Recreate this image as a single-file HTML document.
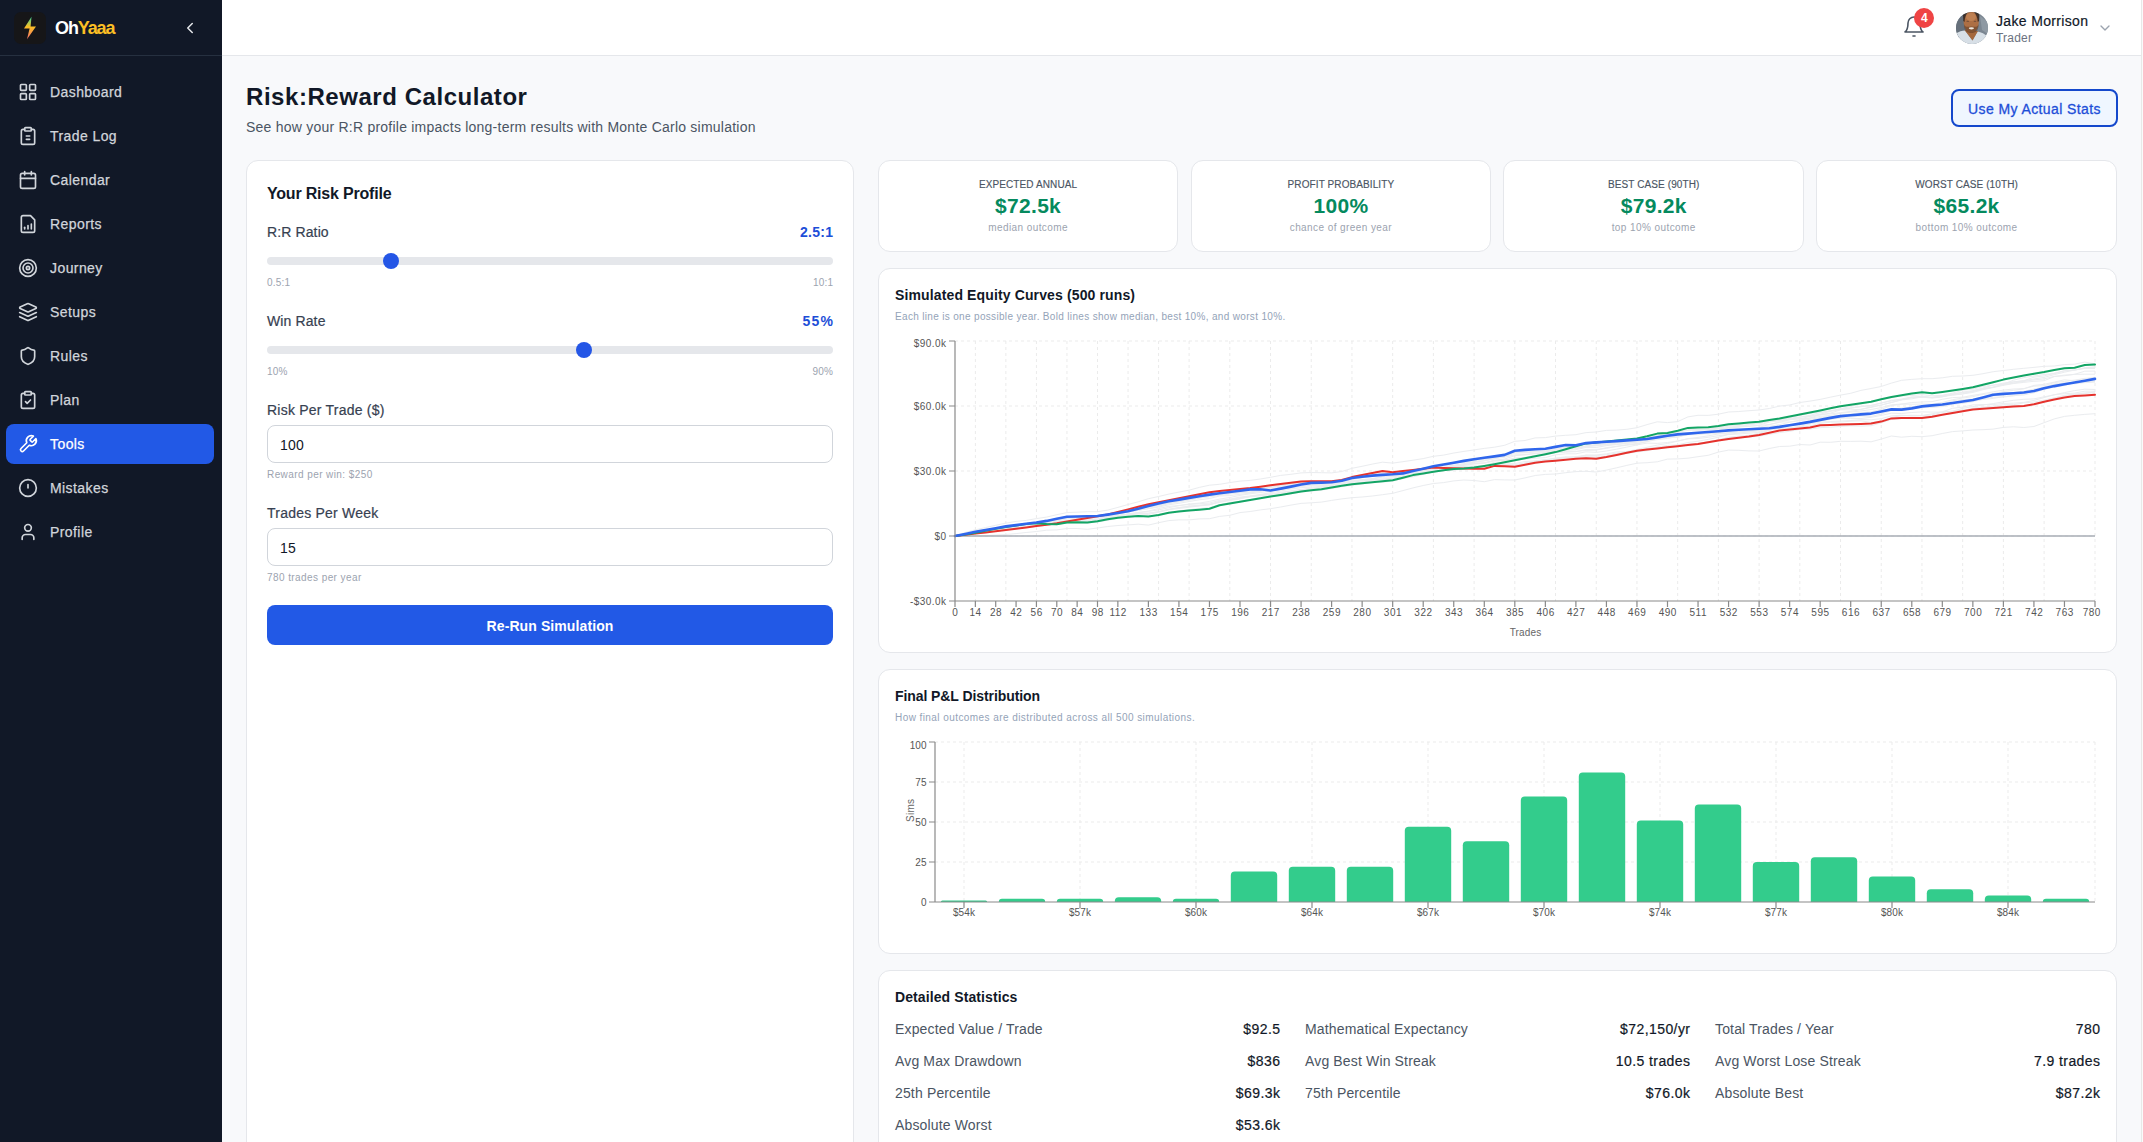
<!DOCTYPE html>
<html><head><meta charset="utf-8"><title>Risk:Reward Calculator</title>
<style>
html,body{margin:0;padding:0;}
body{width:2143px;height:1142px;overflow:hidden;position:relative;background:#f8f9fb;font-family:"Liberation Sans", sans-serif;}
.t{position:absolute;white-space:nowrap;}
.r{position:absolute;}
svg.r{overflow:visible;}
</style></head><body>
<div class="r" style="left:0px;top:0px;width:222px;height:1142px;background:#111827;"></div>
<div class="r" style="left:0px;top:55px;width:222px;height:1px;background:#263040;"></div>
<div class="r" style="left:14px;top:12px;width:32px;height:32px;background:#161618;border-radius:7px;"></div>
<svg class="r" style="left:22px;top:16px" width="16" height="24" viewBox="0 0 16 24">
<defs><linearGradient id="bolt" x1="0" y1="0" x2="0" y2="1">
<stop offset="0" stop-color="#34d399"/><stop offset="0.45" stop-color="#fbbf24"/><stop offset="1" stop-color="#f87171"/></linearGradient></defs>
<path d="M9.5 0.8 L2 12.6 L7.6 12.6 L5 23.2 L14 10.4 L8.6 10.4 Z" fill="url(#bolt)"/></svg>
<div class="t" style="top:15.80px;font-size:18px;line-height:25px;color:#ffffff;font-weight:700;letter-spacing:-1.1px;left:55.00px;">Oh<span style="color:#fbbf24">Yaaa</span></div>
<svg class="r" style="left:181px;top:19px" width="18" height="18" viewBox="0 0 24 24" fill="none" stroke="#e5e7eb" stroke-width="2" stroke-linecap="round" stroke-linejoin="round"><path d="m15 18-6-6 6-6"/></svg>
<svg class="r" style="left:18px;top:82px" width="20" height="20" viewBox="0 0 24 24" fill="none" stroke="#d1d5db" stroke-width="2" stroke-linecap="round" stroke-linejoin="round"><rect width="7" height="7" x="3" y="3" rx="1"/><rect width="7" height="7" x="14" y="3" rx="1"/><rect width="7" height="7" x="14" y="14" rx="1"/><rect width="7" height="7" x="3" y="14" rx="1"/></svg>
<div class="t" style="top:81.90px;font-size:14px;line-height:20px;color:#d1d5db;font-weight:400;letter-spacing:0.42px;left:50.00px;-webkit-text-stroke:0.25px #d1d5db;">Dashboard</div>
<svg class="r" style="left:18px;top:126px" width="20" height="20" viewBox="0 0 24 24" fill="none" stroke="#d1d5db" stroke-width="2" stroke-linecap="round" stroke-linejoin="round"><rect width="8" height="4" x="8" y="2" rx="1" ry="1"/><path d="M16 4h2a2 2 0 0 1 2 2v14a2 2 0 0 1-2 2H6a2 2 0 0 1-2-2V6a2 2 0 0 1 2-2h2"/><path d="M10 12h4"/><path d="M10 16h4"/></svg>
<div class="t" style="top:125.90px;font-size:14px;line-height:20px;color:#d1d5db;font-weight:400;letter-spacing:0.42px;left:50.00px;-webkit-text-stroke:0.25px #d1d5db;">Trade Log</div>
<svg class="r" style="left:18px;top:170px" width="20" height="20" viewBox="0 0 24 24" fill="none" stroke="#d1d5db" stroke-width="2" stroke-linecap="round" stroke-linejoin="round"><path d="M8 2v4"/><path d="M16 2v4"/><rect width="18" height="18" x="3" y="4" rx="2"/><path d="M3 10h18"/></svg>
<div class="t" style="top:169.90px;font-size:14px;line-height:20px;color:#d1d5db;font-weight:400;letter-spacing:0.42px;left:50.00px;-webkit-text-stroke:0.25px #d1d5db;">Calendar</div>
<svg class="r" style="left:18px;top:214px" width="20" height="20" viewBox="0 0 24 24" fill="none" stroke="#d1d5db" stroke-width="2" stroke-linecap="round" stroke-linejoin="round"><path d="M15 2H6a2 2 0 0 0-2 2v16a2 2 0 0 0 2 2h12a2 2 0 0 0 2-2V7Z"/><path d="M8 18v-2"/><path d="M12 18v-4"/><path d="M16 18v-6"/></svg>
<div class="t" style="top:213.90px;font-size:14px;line-height:20px;color:#d1d5db;font-weight:400;letter-spacing:0.42px;left:50.00px;-webkit-text-stroke:0.25px #d1d5db;">Reports</div>
<svg class="r" style="left:18px;top:258px" width="20" height="20" viewBox="0 0 24 24" fill="none" stroke="#d1d5db" stroke-width="2" stroke-linecap="round" stroke-linejoin="round"><circle cx="12" cy="12" r="10"/><circle cx="12" cy="12" r="6"/><circle cx="12" cy="12" r="2"/></svg>
<div class="t" style="top:257.90px;font-size:14px;line-height:20px;color:#d1d5db;font-weight:400;letter-spacing:0.42px;left:50.00px;-webkit-text-stroke:0.25px #d1d5db;">Journey</div>
<svg class="r" style="left:18px;top:302px" width="20" height="20" viewBox="0 0 24 24" fill="none" stroke="#d1d5db" stroke-width="2" stroke-linecap="round" stroke-linejoin="round"><path d="m12.83 2.18a2 2 0 0 0-1.66 0L2.6 6.08a1 1 0 0 0 0 1.83l8.58 3.91a2 2 0 0 0 1.66 0l8.58-3.9a1 1 0 0 0 0-1.83Z"/><path d="m22 17.65-9.17 4.16a2 2 0 0 1-1.66 0L2 17.65"/><path d="m22 12.65-9.17 4.16a2 2 0 0 1-1.66 0L2 12.65"/></svg>
<div class="t" style="top:301.90px;font-size:14px;line-height:20px;color:#d1d5db;font-weight:400;letter-spacing:0.42px;left:50.00px;-webkit-text-stroke:0.25px #d1d5db;">Setups</div>
<svg class="r" style="left:18px;top:346px" width="20" height="20" viewBox="0 0 24 24" fill="none" stroke="#d1d5db" stroke-width="2" stroke-linecap="round" stroke-linejoin="round"><path d="M20 13c0 5-3.5 7.5-7.66 8.95a1 1 0 0 1-.67-.01C7.5 20.5 4 18 4 13V6a1 1 0 0 1 1-1c2 0 4.5-1.2 6.24-2.72a1.17 1.17 0 0 1 1.52 0C14.51 3.81 17 5 19 5a1 1 0 0 1 1 1z"/></svg>
<div class="t" style="top:345.90px;font-size:14px;line-height:20px;color:#d1d5db;font-weight:400;letter-spacing:0.42px;left:50.00px;-webkit-text-stroke:0.25px #d1d5db;">Rules</div>
<svg class="r" style="left:18px;top:390px" width="20" height="20" viewBox="0 0 24 24" fill="none" stroke="#d1d5db" stroke-width="2" stroke-linecap="round" stroke-linejoin="round"><rect width="8" height="4" x="8" y="2" rx="1" ry="1"/><path d="M16 4h2a2 2 0 0 1 2 2v14a2 2 0 0 1-2 2H6a2 2 0 0 1-2-2V6a2 2 0 0 1 2-2h2"/><path d="m9 14 2 2 4-4"/></svg>
<div class="t" style="top:389.90px;font-size:14px;line-height:20px;color:#d1d5db;font-weight:400;letter-spacing:0.42px;left:50.00px;-webkit-text-stroke:0.25px #d1d5db;">Plan</div>
<div class="r" style="left:6px;top:424px;width:208px;height:40px;background:#2259e6;border-radius:8px;"></div>
<svg class="r" style="left:18px;top:434px" width="20" height="20" viewBox="0 0 24 24" fill="none" stroke="#ffffff" stroke-width="2" stroke-linecap="round" stroke-linejoin="round"><path d="M14.7 6.3a1 1 0 0 0 0 1.4l1.6 1.6a1 1 0 0 0 1.4 0l3.77-3.77a6 6 0 0 1-7.94 7.94l-6.91 6.91a2.12 2.12 0 0 1-3-3l6.91-6.91a6 6 0 0 1 7.94-7.94l-3.76 3.76z"/></svg>
<div class="t" style="top:433.90px;font-size:14px;line-height:20px;color:#ffffff;font-weight:400;letter-spacing:0.42px;left:50.00px;-webkit-text-stroke:0.25px #ffffff;">Tools</div>
<svg class="r" style="left:18px;top:478px" width="20" height="20" viewBox="0 0 24 24" fill="none" stroke="#d1d5db" stroke-width="2" stroke-linecap="round" stroke-linejoin="round"><circle cx="12" cy="12" r="10"/><path d="M12 8v4"/></svg>
<div class="t" style="top:477.90px;font-size:14px;line-height:20px;color:#d1d5db;font-weight:400;letter-spacing:0.42px;left:50.00px;-webkit-text-stroke:0.25px #d1d5db;">Mistakes</div>
<svg class="r" style="left:18px;top:522px" width="20" height="20" viewBox="0 0 24 24" fill="none" stroke="#d1d5db" stroke-width="2" stroke-linecap="round" stroke-linejoin="round"><path d="M19 21v-2a4 4 0 0 0-4-4H9a4 4 0 0 0-4 4v2"/><circle cx="12" cy="7" r="4"/></svg>
<div class="t" style="top:521.90px;font-size:14px;line-height:20px;color:#d1d5db;font-weight:400;letter-spacing:0.42px;left:50.00px;-webkit-text-stroke:0.25px #d1d5db;">Profile</div>
<div class="r" style="left:222px;top:0px;width:1919px;height:55px;background:#ffffff;"></div>
<div class="r" style="left:222px;top:55px;width:1919px;height:1px;background:#e5e7eb;"></div>
<div class="r" style="left:2141px;top:0px;width:1px;height:1142px;background:#e8e8e8;"></div>
<div class="r" style="left:2142px;top:0px;width:1px;height:1142px;background:#fafafa;"></div>
<svg class="r" style="left:1902px;top:15px" width="24" height="24" viewBox="0 0 24 24" fill="none" stroke="#4b5563" stroke-width="1.6" stroke-linecap="round" stroke-linejoin="round"><path d="M6 8a6 6 0 0 1 12 0c0 7 3 9 3 9H3s3-2 3-9"/><path d="M11 21h2"/></svg>
<div class="r" style="left:1914px;top:8px;width:20px;height:20px;background:#ef4444;border-radius:50%;"></div>
<div class="t" style="top:10.00px;font-size:12px;line-height:17px;color:#ffffff;font-weight:700;left:1324.30px;width:1200px;text-align:center;">4</div>
<svg class="r" style="left:1956px;top:12px" width="32" height="32" viewBox="0 0 32 32">
<defs><clipPath id="av"><circle cx="16" cy="16" r="16"/></clipPath></defs>
<g clip-path="url(#av)">
<rect width="32" height="32" fill="#7b8691"/>
<path d="M0 0H9V26H0Z" fill="#66707b"/>
<path d="M24 4 L32 10 V22 L26 18Z" fill="#8e99a3"/>
<path d="M0 32 V21.5 C3 19.5 6 18.5 9 18.5 L16.5 28.5 L21.5 19.5 C25 20 29 22 32 25 V32Z" fill="#d7dfe6"/>
<path d="M8.5 18 L22 19 L16.5 28.5Z" fill="#a5683d"/>
<ellipse cx="15.2" cy="10" rx="7.6" ry="10.6" fill="#ad6f44"/>
<ellipse cx="15" cy="5" rx="5" ry="4" fill="#c4875a" opacity="0.7"/>
<path d="M7 3 C8 0 11 -1 12 0 C10 2 9 5 8.5 10 L7.3 9Z M23.3 3 C22.5 0 19 -1 18 0 C20 2 21.3 5 21.8 10 L23 9Z" fill="#2e1f18" opacity="0.8"/>
<path d="M8 12 C8 19 11 21 15.3 21 C19.5 21 22.5 19 22.7 12 C21 16 19 14.5 15.3 14.5 C11.5 14.5 9.5 16 8 12Z" fill="#4a2f20" opacity="0.45"/>
<ellipse cx="15.4" cy="16.3" rx="2.6" ry="1.1" fill="#eee8e0"/>
<ellipse cx="11.8" cy="9.2" rx="1.4" ry="0.5" fill="#6a4a38"/>
<ellipse cx="19" cy="9.2" rx="1.4" ry="0.5" fill="#6a4a38"/>
</g></svg>
<div class="t" style="top:10.90px;font-size:14px;line-height:20px;color:#111827;font-weight:400;letter-spacing:0.34px;left:1996.00px;-webkit-text-stroke:0.2px #111827;">Jake Morrison</div>
<div class="t" style="top:30.40px;font-size:12px;line-height:17px;color:#6b7280;font-weight:400;letter-spacing:0.2px;left:1996.00px;">Trader</div>
<svg class="r" style="left:2097px;top:20px" width="16" height="16" viewBox="0 0 24 24" fill="none" stroke="#9ca3af" stroke-width="2" stroke-linecap="round" stroke-linejoin="round"><path d="m6 9 6 6 6-6"/></svg>
<div class="t" style="top:80.10px;font-size:24px;line-height:34px;color:#111827;font-weight:700;letter-spacing:0.55px;left:246.00px;">Risk:Reward Calculator</div>
<div class="t" style="top:116.90px;font-size:14px;line-height:20px;color:#4b5563;font-weight:400;letter-spacing:0.23px;left:246.00px;">See how your R:R profile impacts long-term results with Monte Carlo simulation</div>
<div class="r" style="left:1951px;top:89px;width:167px;height:38px;box-sizing:border-box;border:2px solid #1448cc;border-radius:8px;background:#eff6ff;"></div>
<div class="t" style="top:98.50px;font-size:14px;line-height:20px;color:#1d4ed8;font-weight:400;letter-spacing:0.4px;left:1434.50px;width:1200px;text-align:center;-webkit-text-stroke:0.3px #1d4ed8;">Use My Actual Stats</div>
<div class="r" style="left:246px;top:160px;width:608px;height:1100px;box-sizing:border-box;background:#ffffff;border:1px solid #e5e7eb;border-radius:12px;"></div>
<div class="t" style="top:182.70px;font-size:16px;line-height:22px;color:#111827;font-weight:700;letter-spacing:-0.2px;left:267.00px;">Your Risk Profile</div>
<div class="t" style="top:221.90px;font-size:14px;line-height:20px;color:#374151;font-weight:400;letter-spacing:0.12px;left:267.00px;-webkit-text-stroke:0.2px #374151;">R:R Ratio</div>
<div class="t" style="top:221.90px;font-size:14px;line-height:20px;color:#1d4ed8;font-weight:700;letter-spacing:0.3px;right:1309.70px;text-align:right;">2.5:1</div>
<div class="r" style="left:267px;top:257px;width:566px;height:8px;background:#e5e7eb;border-radius:4px;"></div>
<div class="r" style="left:382.79px;top:253px;width:16px;height:16px;background:#2456e6;border-radius:50%;"></div>
<div class="t" style="top:276.40px;font-size:10px;line-height:14px;color:#9ca3af;font-weight:400;letter-spacing:0.2px;left:267.00px;">0.5:1</div>
<div class="t" style="top:276.40px;font-size:10px;line-height:14px;color:#9ca3af;font-weight:400;letter-spacing:0.2px;right:1309.80px;text-align:right;">10:1</div>
<div class="t" style="top:310.90px;font-size:14px;line-height:20px;color:#374151;font-weight:400;letter-spacing:0.12px;left:267.00px;-webkit-text-stroke:0.2px #374151;">Win Rate</div>
<div class="t" style="top:310.90px;font-size:14px;line-height:20px;color:#1d4ed8;font-weight:700;letter-spacing:1.2px;right:1308.80px;text-align:right;">55%</div>
<div class="r" style="left:267px;top:346px;width:566px;height:8px;background:#e5e7eb;border-radius:4px;"></div>
<div class="r" style="left:576.38px;top:342px;width:16px;height:16px;background:#2456e6;border-radius:50%;"></div>
<div class="t" style="top:365.40px;font-size:10px;line-height:14px;color:#9ca3af;font-weight:400;letter-spacing:0.2px;left:267.00px;">10%</div>
<div class="t" style="top:365.40px;font-size:10px;line-height:14px;color:#9ca3af;font-weight:400;letter-spacing:0.2px;right:1309.80px;text-align:right;">90%</div>
<div class="t" style="top:399.90px;font-size:14px;line-height:20px;color:#374151;font-weight:400;letter-spacing:0.22px;left:267.00px;-webkit-text-stroke:0.2px #374151;">Risk Per Trade ($)</div>
<div class="r" style="left:267px;top:425px;width:566px;height:38px;box-sizing:border-box;border:1px solid #d1d5db;border-radius:8px;background:#fff;"></div>
<div class="t" style="top:434.90px;font-size:14px;line-height:20px;color:#111827;font-weight:400;letter-spacing:0.2px;left:280.00px;">100</div>
<div class="t" style="top:468.40px;font-size:10px;line-height:14px;color:#9ca3af;font-weight:400;letter-spacing:0.42px;left:267.00px;">Reward per win: $250</div>
<div class="t" style="top:502.90px;font-size:14px;line-height:20px;color:#374151;font-weight:400;letter-spacing:0.22px;left:267.00px;-webkit-text-stroke:0.2px #374151;">Trades Per Week</div>
<div class="r" style="left:267px;top:528px;width:566px;height:38px;box-sizing:border-box;border:1px solid #d1d5db;border-radius:8px;background:#fff;"></div>
<div class="t" style="top:537.90px;font-size:14px;line-height:20px;color:#111827;font-weight:400;letter-spacing:0.2px;left:280.00px;">15</div>
<div class="t" style="top:571.40px;font-size:10px;line-height:14px;color:#9ca3af;font-weight:400;letter-spacing:0.42px;left:267.00px;">780 trades per year</div>
<div class="r" style="left:267px;top:605px;width:566px;height:40px;background:#2259e6;border-radius:8px;"></div>
<div class="t" style="top:615.90px;font-size:14px;line-height:20px;color:#ffffff;font-weight:700;letter-spacing:0.1px;left:-50.00px;width:1200px;text-align:center;">Re-Run Simulation</div>
<div class="r" style="left:877.67px;top:160px;width:300.83px;height:92px;box-sizing:border-box;background:#ffffff;border:1px solid #e5e7eb;border-radius:12px;"></div>
<div class="t" style="top:178.00px;font-size:10px;line-height:14px;color:#4b5563;font-weight:400;letter-spacing:0.1px;left:428.09px;width:1200px;text-align:center;-webkit-text-stroke:0.15px #4b5563;">EXPECTED ANNUAL</div>
<div class="t" style="top:191.20px;font-size:21px;line-height:29px;color:#058a5e;font-weight:700;letter-spacing:0.3px;left:428.09px;width:1200px;text-align:center;">$72.5k</div>
<div class="t" style="top:220.50px;font-size:10px;line-height:14px;color:#9ca3af;font-weight:400;letter-spacing:0.42px;left:428.09px;width:1200px;text-align:center;">median outcome</div>
<div class="r" style="left:1190.5px;top:160px;width:300.83px;height:92px;box-sizing:border-box;background:#ffffff;border:1px solid #e5e7eb;border-radius:12px;"></div>
<div class="t" style="top:178.00px;font-size:10px;line-height:14px;color:#4b5563;font-weight:400;letter-spacing:0.1px;left:740.92px;width:1200px;text-align:center;-webkit-text-stroke:0.15px #4b5563;">PROFIT PROBABILITY</div>
<div class="t" style="top:191.20px;font-size:21px;line-height:29px;color:#058a5e;font-weight:700;letter-spacing:0.3px;left:740.92px;width:1200px;text-align:center;">100%</div>
<div class="t" style="top:220.50px;font-size:10px;line-height:14px;color:#9ca3af;font-weight:400;letter-spacing:0.42px;left:740.92px;width:1200px;text-align:center;">chance of green year</div>
<div class="r" style="left:1503.34px;top:160px;width:300.83px;height:92px;box-sizing:border-box;background:#ffffff;border:1px solid #e5e7eb;border-radius:12px;"></div>
<div class="t" style="top:178.00px;font-size:10px;line-height:14px;color:#4b5563;font-weight:400;letter-spacing:0.1px;left:1053.75px;width:1200px;text-align:center;-webkit-text-stroke:0.15px #4b5563;">BEST CASE (90TH)</div>
<div class="t" style="top:191.20px;font-size:21px;line-height:29px;color:#058a5e;font-weight:700;letter-spacing:0.3px;left:1053.75px;width:1200px;text-align:center;">$79.2k</div>
<div class="t" style="top:220.50px;font-size:10px;line-height:14px;color:#9ca3af;font-weight:400;letter-spacing:0.42px;left:1053.75px;width:1200px;text-align:center;">top 10% outcome</div>
<div class="r" style="left:1816.17px;top:160px;width:300.83px;height:92px;box-sizing:border-box;background:#ffffff;border:1px solid #e5e7eb;border-radius:12px;"></div>
<div class="t" style="top:178.00px;font-size:10px;line-height:14px;color:#4b5563;font-weight:400;letter-spacing:0.1px;left:1366.58px;width:1200px;text-align:center;-webkit-text-stroke:0.15px #4b5563;">WORST CASE (10TH)</div>
<div class="t" style="top:191.20px;font-size:21px;line-height:29px;color:#058a5e;font-weight:700;letter-spacing:0.3px;left:1366.58px;width:1200px;text-align:center;">$65.2k</div>
<div class="t" style="top:220.50px;font-size:10px;line-height:14px;color:#9ca3af;font-weight:400;letter-spacing:0.42px;left:1366.58px;width:1200px;text-align:center;">bottom 10% outcome</div>
<div class="r" style="left:877.67px;top:268px;width:1239.33px;height:385px;box-sizing:border-box;background:#ffffff;border:1px solid #e5e7eb;border-radius:12px;"></div>
<div class="t" style="top:285.40px;font-size:14px;line-height:20px;color:#111827;font-weight:700;letter-spacing:0.13px;left:895.00px;">Simulated Equity Curves (500 runs)</div>
<div class="t" style="top:310.40px;font-size:10px;line-height:14px;color:#94a3b8;font-weight:400;letter-spacing:0.33px;left:895.00px;">Each line is one possible year. Bold lines show median, best 10%, and worst 10%.</div>
<div class="r" style="left:877.67px;top:669px;width:1239.33px;height:285px;box-sizing:border-box;background:#ffffff;border:1px solid #e5e7eb;border-radius:12px;"></div>
<div class="t" style="top:686.40px;font-size:14px;line-height:20px;color:#111827;font-weight:700;letter-spacing:-0.08px;left:895.00px;">Final P&amp;L Distribution</div>
<div class="t" style="top:711.40px;font-size:10px;line-height:14px;color:#94a3b8;font-weight:400;letter-spacing:0.43px;left:895.00px;">How final outcomes are distributed across all 500 simulations.</div>
<div class="r" style="left:877.67px;top:970px;width:1239.33px;height:400px;box-sizing:border-box;background:#ffffff;border:1px solid #e5e7eb;border-radius:12px;"></div>
<div class="t" style="top:987.40px;font-size:14px;line-height:20px;color:#111827;font-weight:700;letter-spacing:0.1px;left:895.00px;">Detailed Statistics</div>
<div class="t" style="top:1019.40px;font-size:14px;line-height:20px;color:#4b5563;font-weight:400;letter-spacing:0.15px;left:895.00px;">Expected Value / Trade</div>
<div class="t" style="top:1019.40px;font-size:14px;line-height:20px;color:#111827;font-weight:400;letter-spacing:0.42px;right:862.58px;text-align:right;-webkit-text-stroke:0.2px #111827;">$92.5</div>
<div class="t" style="top:1019.40px;font-size:14px;line-height:20px;color:#4b5563;font-weight:400;letter-spacing:0.15px;left:1305.00px;">Mathematical Expectancy</div>
<div class="t" style="top:1019.40px;font-size:14px;line-height:20px;color:#111827;font-weight:400;letter-spacing:0.42px;right:452.58px;text-align:right;-webkit-text-stroke:0.2px #111827;">$72,150/yr</div>
<div class="t" style="top:1019.40px;font-size:14px;line-height:20px;color:#4b5563;font-weight:400;letter-spacing:0.15px;left:1715.00px;">Total Trades / Year</div>
<div class="t" style="top:1019.40px;font-size:14px;line-height:20px;color:#111827;font-weight:400;letter-spacing:0.42px;right:42.58px;text-align:right;-webkit-text-stroke:0.2px #111827;">780</div>
<div class="t" style="top:1051.40px;font-size:14px;line-height:20px;color:#4b5563;font-weight:400;letter-spacing:0.15px;left:895.00px;">Avg Max Drawdown</div>
<div class="t" style="top:1051.40px;font-size:14px;line-height:20px;color:#111827;font-weight:400;letter-spacing:0.42px;right:862.58px;text-align:right;-webkit-text-stroke:0.2px #111827;">$836</div>
<div class="t" style="top:1051.40px;font-size:14px;line-height:20px;color:#4b5563;font-weight:400;letter-spacing:0.15px;left:1305.00px;">Avg Best Win Streak</div>
<div class="t" style="top:1051.40px;font-size:14px;line-height:20px;color:#111827;font-weight:400;letter-spacing:0.42px;right:452.58px;text-align:right;-webkit-text-stroke:0.2px #111827;">10.5 trades</div>
<div class="t" style="top:1051.40px;font-size:14px;line-height:20px;color:#4b5563;font-weight:400;letter-spacing:0.15px;left:1715.00px;">Avg Worst Lose Streak</div>
<div class="t" style="top:1051.40px;font-size:14px;line-height:20px;color:#111827;font-weight:400;letter-spacing:0.42px;right:42.58px;text-align:right;-webkit-text-stroke:0.2px #111827;">7.9 trades</div>
<div class="t" style="top:1083.40px;font-size:14px;line-height:20px;color:#4b5563;font-weight:400;letter-spacing:0.15px;left:895.00px;">25th Percentile</div>
<div class="t" style="top:1083.40px;font-size:14px;line-height:20px;color:#111827;font-weight:400;letter-spacing:0.42px;right:862.58px;text-align:right;-webkit-text-stroke:0.2px #111827;">$69.3k</div>
<div class="t" style="top:1083.40px;font-size:14px;line-height:20px;color:#4b5563;font-weight:400;letter-spacing:0.15px;left:1305.00px;">75th Percentile</div>
<div class="t" style="top:1083.40px;font-size:14px;line-height:20px;color:#111827;font-weight:400;letter-spacing:0.42px;right:452.58px;text-align:right;-webkit-text-stroke:0.2px #111827;">$76.0k</div>
<div class="t" style="top:1083.40px;font-size:14px;line-height:20px;color:#4b5563;font-weight:400;letter-spacing:0.15px;left:1715.00px;">Absolute Best</div>
<div class="t" style="top:1083.40px;font-size:14px;line-height:20px;color:#111827;font-weight:400;letter-spacing:0.42px;right:42.58px;text-align:right;-webkit-text-stroke:0.2px #111827;">$87.2k</div>
<div class="t" style="top:1115.40px;font-size:14px;line-height:20px;color:#4b5563;font-weight:400;letter-spacing:0.15px;left:895.00px;">Absolute Worst</div>
<div class="t" style="top:1115.40px;font-size:14px;line-height:20px;color:#111827;font-weight:400;letter-spacing:0.42px;right:862.58px;text-align:right;-webkit-text-stroke:0.2px #111827;">$53.6k</div>
<svg class="r" style="left:0;top:0" width="2143" height="1142" viewBox="0 0 2143 1142" font-family='"Liberation Sans", sans-serif'>
<path d="M955.0 341H2095.0 M955.0 406H2095.0 M955.0 471H2095.0 M955.0 536H2095.0 M975.36 341V601 M1005.89 341V601 M1036.43 341V601 M1066.96 341V601 M1097.50 341V601 M1128.04 341V601 M1158.57 341V601 M1189.11 341V601 M1229.82 341V601 M1270.54 341V601 M1311.25 341V601 M1351.96 341V601 M1392.68 341V601 M1433.39 341V601 M1474.11 341V601 M1514.82 341V601 M1555.54 341V601 M1596.25 341V601 M1636.96 341V601 M1677.68 341V601 M1718.39 341V601 M1759.11 341V601 M1799.82 341V601 M1840.54 341V601 M1881.25 341V601 M1921.96 341V601 M1962.68 341V601 M2003.39 341V601 M2044.11 341V601 M2095.00 341V601" stroke="#ebebeb" stroke-width="1" stroke-dasharray="3 3" fill="none"/>
<polyline points="955.0,536.0 965.2,533.8 975.4,531.9 985.5,530.1 995.7,528.1 1005.9,526.3 1016.1,525.1 1026.2,524.0 1036.4,522.5 1046.6,520.6 1056.8,518.6 1067.0,516.8 1077.1,517.0 1087.3,517.0 1097.5,516.7 1107.7,515.0 1117.9,513.3 1128.0,510.6 1138.2,507.8 1148.4,505.0 1158.6,503.0 1168.8,501.0 1178.9,498.9 1189.1,496.9 1199.3,495.0 1209.5,493.3 1219.6,492.4 1229.8,491.4 1240.0,489.5 1250.2,488.8 1260.4,486.9 1270.5,485.4 1280.7,483.4 1290.9,482.3 1301.1,480.9 1311.2,480.6 1321.4,482.2 1331.6,482.0 1341.8,481.2 1352.0,477.6 1362.1,475.5 1372.3,473.8 1382.5,471.8 1392.7,473.1 1402.9,471.8 1413.0,470.1 1423.2,469.0 1433.4,466.3 1443.6,465.5 1453.8,463.4 1463.9,461.9 1474.1,460.3 1484.3,459.4 1494.5,457.5 1504.6,456.5 1514.8,452.3 1525.0,452.1 1535.2,451.6 1545.4,451.0 1555.5,448.6 1565.7,447.0 1575.9,447.3 1586.1,446.1 1596.2,445.0 1606.4,444.1 1616.6,443.2 1626.8,442.2 1637.0,441.1 1647.1,438.7 1657.3,435.7 1667.5,434.3 1677.7,431.8 1687.9,429.3 1698.0,429.8 1708.2,429.9 1718.4,429.2 1728.6,427.7 1738.8,427.1 1748.9,426.1 1759.1,425.4 1769.3,424.6 1779.5,422.4 1789.6,419.7 1799.8,418.8 1810.0,416.5 1820.2,414.8 1830.4,413.1 1840.5,409.9 1850.7,409.9 1860.9,409.3 1871.1,407.4 1881.2,405.1 1891.4,402.5 1901.6,399.7 1911.8,397.6 1922.0,396.2 1932.1,397.7 1942.3,396.6 1952.5,394.8 1962.7,393.9 1972.9,391.3 1983.0,389.1 1993.2,387.2 2003.4,384.1 2013.6,380.2 2023.8,377.6 2033.9,376.0 2044.1,374.5 2054.3,373.5 2064.5,370.7 2074.6,370.1 2084.8,367.8 2095.0,366.9" fill="none" stroke="#eaecef" stroke-width="1"/>
<polyline points="955.0,536.0 965.2,533.9 975.4,532.1 985.5,530.5 995.7,528.7 1005.9,526.9 1016.1,525.7 1026.2,524.9 1036.4,523.7 1046.6,522.1 1056.8,520.4 1067.0,518.3 1077.1,518.5 1087.3,518.1 1097.5,517.6 1107.7,516.1 1117.9,514.1 1128.0,511.8 1138.2,509.4 1148.4,506.6 1158.6,504.3 1168.8,502.0 1178.9,499.9 1189.1,498.2 1199.3,496.2 1209.5,494.6 1219.6,493.1 1229.8,491.9 1240.0,490.8 1250.2,489.8 1260.4,488.8 1270.5,487.1 1280.7,485.6 1290.9,483.7 1301.1,483.2 1311.2,483.3 1321.4,483.0 1331.6,482.5 1341.8,480.7 1352.0,478.0 1362.1,476.2 1372.3,475.4 1382.5,473.5 1392.7,474.0 1402.9,471.3 1413.0,470.8 1423.2,469.5 1433.4,466.4 1443.6,464.7 1453.8,462.2 1463.9,462.5 1474.1,461.6 1484.3,460.6 1494.5,458.7 1504.6,456.1 1514.8,452.5 1525.0,450.7 1535.2,450.3 1545.4,448.5 1555.5,446.4 1565.7,445.5 1575.9,446.7 1586.1,444.1 1596.2,442.7 1606.4,442.3 1616.6,441.8 1626.8,440.1 1637.0,438.7 1647.1,436.2 1657.3,433.2 1667.5,432.3 1677.7,431.2 1687.9,429.2 1698.0,430.1 1708.2,429.5 1718.4,428.2 1728.6,425.7 1738.8,424.8 1748.9,423.1 1759.1,421.0 1769.3,420.0 1779.5,419.5 1789.6,418.3 1799.8,417.2 1810.0,415.3 1820.2,412.6 1830.4,410.8 1840.5,408.7 1850.7,406.5 1860.9,404.0 1871.1,401.7 1881.2,399.6 1891.4,397.6 1901.6,395.9 1911.8,395.5 1922.0,394.6 1932.1,395.8 1942.3,395.3 1952.5,393.2 1962.7,390.1 1972.9,389.2 1983.0,386.4 1993.2,385.2 2003.4,383.1 2013.6,381.8 2023.8,380.7 2033.9,377.2 2044.1,375.9 2054.3,373.3 2064.5,370.9 2074.6,370.0 2084.8,368.3 2095.0,368.4" fill="none" stroke="#eaecef" stroke-width="1"/>
<polyline points="955.0,536.0 965.2,534.0 975.4,532.0 985.5,530.0 995.7,528.3 1005.9,526.7 1016.1,525.3 1026.2,524.1 1036.4,522.8 1046.6,521.5 1056.8,519.4 1067.0,517.3 1077.1,516.9 1087.3,517.3 1097.5,517.2 1107.7,515.5 1117.9,513.3 1128.0,511.1 1138.2,508.9 1148.4,506.9 1158.6,504.8 1168.8,502.3 1178.9,500.3 1189.1,499.1 1199.3,497.5 1209.5,495.7 1219.6,494.0 1229.8,492.9 1240.0,491.8 1250.2,490.4 1260.4,489.1 1270.5,487.7 1280.7,486.0 1290.9,484.4 1301.1,482.7 1311.2,481.7 1321.4,482.0 1331.6,480.7 1341.8,479.4 1352.0,476.7 1362.1,474.7 1372.3,473.2 1382.5,472.1 1392.7,473.0 1402.9,471.5 1413.0,469.8 1423.2,468.5 1433.4,466.9 1443.6,465.0 1453.8,462.7 1463.9,460.6 1474.1,458.9 1484.3,457.2 1494.5,456.4 1504.6,455.6 1514.8,452.4 1525.0,452.3 1535.2,451.1 1545.4,450.9 1555.5,449.8 1565.7,447.1 1575.9,446.3 1586.1,444.1 1596.2,444.3 1606.4,444.1 1616.6,442.2 1626.8,441.8 1637.0,440.4 1647.1,438.1 1657.3,435.5 1667.5,434.7 1677.7,431.7 1687.9,428.7 1698.0,427.7 1708.2,427.6 1718.4,428.0 1728.6,428.2 1738.8,426.9 1748.9,424.8 1759.1,423.6 1769.3,421.3 1779.5,421.0 1789.6,419.7 1799.8,417.2 1810.0,416.0 1820.2,414.2 1830.4,411.3 1840.5,409.3 1850.7,407.9 1860.9,406.7 1871.1,405.5 1881.2,403.1 1891.4,400.9 1901.6,399.0 1911.8,397.0 1922.0,397.2 1932.1,398.0 1942.3,396.9 1952.5,394.1 1962.7,392.5 1972.9,391.5 1983.0,388.4 1993.2,387.2 2003.4,384.7 2013.6,383.1 2023.8,381.5 2033.9,379.9 2044.1,378.9 2054.3,376.4 2064.5,375.7 2074.6,374.3 2084.8,371.2 2095.0,371.1" fill="none" stroke="#eaecef" stroke-width="1"/>
<polyline points="955.0,536.0 965.2,534.0 975.4,532.2 985.5,530.8 995.7,528.9 1005.9,527.4 1016.1,526.4 1026.2,525.3 1036.4,524.0 1046.6,522.3 1056.8,520.4 1067.0,518.2 1077.1,517.9 1087.3,517.8 1097.5,517.3 1107.7,515.9 1117.9,513.6 1128.0,511.1 1138.2,509.4 1148.4,507.4 1158.6,505.3 1168.8,503.2 1178.9,501.4 1189.1,499.4 1199.3,497.6 1209.5,496.8 1219.6,494.8 1229.8,493.5 1240.0,492.7 1250.2,491.8 1260.4,490.7 1270.5,489.5 1280.7,487.1 1290.9,485.4 1301.1,484.2 1311.2,483.8 1321.4,484.1 1331.6,483.8 1341.8,482.3 1352.0,479.7 1362.1,477.8 1372.3,476.2 1382.5,474.7 1392.7,475.1 1402.9,473.1 1413.0,471.1 1423.2,470.2 1433.4,468.7 1443.6,467.4 1453.8,466.1 1463.9,464.9 1474.1,463.6 1484.3,462.8 1494.5,460.2 1504.6,459.0 1514.8,455.7 1525.0,454.9 1535.2,453.5 1545.4,452.7 1555.5,451.3 1565.7,450.4 1575.9,449.7 1586.1,447.4 1596.2,447.5 1606.4,445.6 1616.6,444.6 1626.8,443.0 1637.0,441.6 1647.1,438.5 1657.3,436.9 1667.5,436.0 1677.7,433.6 1687.9,432.7 1698.0,432.5 1708.2,434.0 1718.4,432.8 1728.6,430.6 1738.8,429.5 1748.9,429.4 1759.1,428.0 1769.3,426.3 1779.5,424.7 1789.6,422.1 1799.8,420.2 1810.0,417.9 1820.2,414.8 1830.4,413.8 1840.5,412.7 1850.7,411.4 1860.9,409.5 1871.1,406.8 1881.2,405.0 1891.4,402.5 1901.6,399.9 1911.8,398.8 1922.0,396.9 1932.1,397.4 1942.3,396.3 1952.5,395.2 1962.7,393.9 1972.9,392.4 1983.0,389.7 1993.2,387.5 2003.4,385.3 2013.6,383.5 2023.8,382.4 2033.9,381.3 2044.1,380.7 2054.3,376.6 2064.5,375.1 2074.6,374.4 2084.8,374.2 2095.0,374.2" fill="none" stroke="#eaecef" stroke-width="1"/>
<polyline points="955.0,536.0 965.2,534.1 975.4,532.3 985.5,530.8 995.7,529.1 1005.9,527.5 1016.1,526.2 1026.2,524.9 1036.4,523.4 1046.6,521.5 1056.8,520.0 1067.0,518.5 1077.1,518.2 1087.3,517.9 1097.5,517.4 1107.7,515.9 1117.9,513.7 1128.0,511.8 1138.2,510.3 1148.4,508.5 1158.6,506.4 1168.8,503.7 1178.9,501.9 1189.1,500.1 1199.3,498.2 1209.5,496.4 1219.6,495.3 1229.8,494.0 1240.0,492.7 1250.2,492.4 1260.4,490.9 1270.5,488.7 1280.7,487.5 1290.9,485.7 1301.1,485.2 1311.2,483.9 1321.4,483.3 1331.6,482.0 1341.8,480.8 1352.0,478.0 1362.1,476.5 1372.3,474.8 1382.5,473.0 1392.7,474.1 1402.9,472.9 1413.0,471.4 1423.2,469.5 1433.4,466.9 1443.6,465.5 1453.8,465.2 1463.9,463.6 1474.1,462.2 1484.3,461.0 1494.5,458.5 1504.6,457.2 1514.8,454.8 1525.0,454.5 1535.2,453.5 1545.4,452.5 1555.5,450.1 1565.7,448.9 1575.9,448.8 1586.1,446.6 1596.2,445.9 1606.4,444.8 1616.6,444.3 1626.8,443.4 1637.0,442.2 1647.1,440.2 1657.3,438.4 1667.5,437.7 1677.7,437.3 1687.9,434.2 1698.0,433.3 1708.2,433.3 1718.4,431.7 1728.6,431.0 1738.8,429.8 1748.9,428.8 1759.1,427.3 1769.3,424.5 1779.5,422.0 1789.6,422.0 1799.8,420.7 1810.0,419.3 1820.2,417.7 1830.4,416.4 1840.5,415.5 1850.7,414.0 1860.9,412.5 1871.1,411.9 1881.2,409.3 1891.4,405.6 1901.6,404.1 1911.8,402.5 1922.0,402.0 1932.1,401.6 1942.3,399.3 1952.5,397.6 1962.7,397.2 1972.9,395.4 1983.0,393.7 1993.2,391.8 2003.4,390.1 2013.6,389.0 2023.8,388.6 2033.9,385.4 2044.1,384.3 2054.3,382.1 2064.5,379.8 2074.6,380.8 2084.8,378.4 2095.0,379.1" fill="none" stroke="#eaecef" stroke-width="1"/>
<polyline points="955.0,536.0 965.2,534.3 975.4,532.6 985.5,531.2 995.7,529.6 1005.9,527.7 1016.1,526.4 1026.2,525.0 1036.4,523.5 1046.6,522.5 1056.8,520.9 1067.0,519.0 1077.1,518.7 1087.3,518.5 1097.5,517.6 1107.7,515.9 1117.9,514.0 1128.0,512.0 1138.2,510.3 1148.4,508.7 1158.6,507.1 1168.8,504.8 1178.9,503.3 1189.1,501.5 1199.3,499.8 1209.5,498.5 1219.6,496.0 1229.8,495.6 1240.0,494.3 1250.2,493.0 1260.4,491.2 1270.5,490.4 1280.7,489.5 1290.9,488.2 1301.1,486.1 1311.2,485.1 1321.4,484.9 1331.6,483.9 1341.8,482.0 1352.0,479.1 1362.1,477.3 1372.3,475.9 1382.5,474.1 1392.7,474.5 1402.9,474.2 1413.0,473.3 1423.2,471.2 1433.4,469.3 1443.6,467.6 1453.8,465.9 1463.9,465.2 1474.1,464.1 1484.3,463.1 1494.5,460.8 1504.6,460.0 1514.8,458.6 1525.0,457.6 1535.2,455.5 1545.4,454.4 1555.5,452.5 1565.7,451.6 1575.9,451.4 1586.1,450.5 1596.2,450.2 1606.4,447.7 1616.6,446.5 1626.8,445.2 1637.0,444.1 1647.1,441.4 1657.3,439.6 1667.5,438.4 1677.7,436.3 1687.9,434.6 1698.0,434.1 1708.2,432.7 1718.4,430.3 1728.6,427.3 1738.8,426.2 1748.9,426.3 1759.1,425.2 1769.3,422.1 1779.5,420.0 1789.6,419.1 1799.8,418.9 1810.0,418.3 1820.2,416.4 1830.4,415.3 1840.5,413.3 1850.7,412.1 1860.9,411.0 1871.1,409.5 1881.2,407.6 1891.4,404.8 1901.6,404.1 1911.8,404.2 1922.0,404.0 1932.1,404.2 1942.3,402.5 1952.5,399.7 1962.7,398.0 1972.9,396.7 1983.0,394.3 1993.2,393.6 2003.4,391.6 2013.6,390.3 2023.8,388.8 2033.9,386.1 2044.1,385.7 2054.3,382.6 2064.5,381.4 2074.6,380.1 2084.8,378.5 2095.0,377.3" fill="none" stroke="#eaecef" stroke-width="1"/>
<polyline points="955.0,536.0 965.2,534.4 975.4,533.0 985.5,531.4 995.7,529.9 1005.9,528.6 1016.1,527.2 1026.2,526.0 1036.4,524.6 1046.6,523.2 1056.8,521.9 1067.0,520.4 1077.1,520.2 1087.3,519.9 1097.5,519.3 1107.7,517.1 1117.9,515.3 1128.0,514.1 1138.2,512.6 1148.4,511.4 1158.6,509.9 1168.8,507.7 1178.9,505.7 1189.1,504.0 1199.3,503.1 1209.5,501.4 1219.6,499.1 1229.8,497.5 1240.0,495.4 1250.2,493.8 1260.4,492.5 1270.5,491.0 1280.7,489.4 1290.9,487.1 1301.1,486.3 1311.2,485.8 1321.4,485.7 1331.6,485.4 1341.8,483.7 1352.0,481.1 1362.1,479.7 1372.3,479.0 1382.5,476.6 1392.7,476.5 1402.9,474.3 1413.0,472.7 1423.2,471.9 1433.4,469.7 1443.6,467.4 1453.8,465.8 1463.9,464.6 1474.1,463.1 1484.3,463.1 1494.5,460.6 1504.6,460.5 1514.8,458.1 1525.0,457.4 1535.2,455.2 1545.4,455.1 1555.5,452.7 1565.7,452.2 1575.9,451.7 1586.1,449.5 1596.2,449.4 1606.4,448.4 1616.6,446.3 1626.8,444.6 1637.0,443.4 1647.1,441.7 1657.3,438.1 1667.5,437.3 1677.7,436.2 1687.9,434.7 1698.0,434.7 1708.2,433.3 1718.4,433.8 1728.6,432.6 1738.8,431.7 1748.9,431.3 1759.1,430.5 1769.3,428.5 1779.5,426.0 1789.6,425.1 1799.8,423.7 1810.0,420.7 1820.2,417.7 1830.4,416.9 1840.5,415.9 1850.7,415.1 1860.9,414.7 1871.1,413.8 1881.2,412.7 1891.4,409.4 1901.6,408.0 1911.8,407.3 1922.0,407.1 1932.1,407.3 1942.3,406.6 1952.5,404.3 1962.7,403.3 1972.9,401.7 1983.0,399.0 1993.2,397.2 2003.4,397.0 2013.6,395.9 2023.8,394.0 2033.9,390.2 2044.1,387.4 2054.3,384.7 2064.5,382.9 2074.6,383.8 2084.8,382.6 2095.0,382.1" fill="none" stroke="#eaecef" stroke-width="1"/>
<polyline points="955.0,536.0 965.2,534.3 975.4,532.7 985.5,531.1 995.7,530.1 1005.9,528.6 1016.1,527.2 1026.2,526.2 1036.4,524.9 1046.6,523.1 1056.8,522.2 1067.0,520.4 1077.1,519.7 1087.3,519.9 1097.5,519.2 1107.7,517.3 1117.9,515.5 1128.0,514.2 1138.2,512.5 1148.4,511.1 1158.6,508.5 1168.8,506.4 1178.9,505.5 1189.1,504.5 1199.3,503.7 1209.5,503.0 1219.6,500.4 1229.8,499.2 1240.0,497.1 1250.2,495.9 1260.4,494.5 1270.5,492.7 1280.7,491.0 1290.9,489.0 1301.1,487.6 1311.2,487.2 1321.4,486.3 1331.6,485.6 1341.8,483.7 1352.0,481.7 1362.1,479.8 1372.3,478.6 1382.5,477.1 1392.7,477.1 1402.9,474.8 1413.0,472.2 1423.2,470.6 1433.4,469.3 1443.6,468.5 1453.8,466.8 1463.9,466.2 1474.1,466.0 1484.3,465.6 1494.5,462.3 1504.6,462.1 1514.8,460.1 1525.0,459.3 1535.2,458.2 1545.4,457.6 1555.5,454.8 1565.7,453.8 1575.9,453.8 1586.1,451.8 1596.2,452.4 1606.4,451.0 1616.6,449.2 1626.8,447.1 1637.0,444.9 1647.1,443.1 1657.3,443.4 1667.5,442.5 1677.7,441.0 1687.9,438.7 1698.0,437.4 1708.2,435.9 1718.4,433.9 1728.6,433.0 1738.8,431.7 1748.9,431.2 1759.1,429.1 1769.3,427.8 1779.5,425.8 1789.6,424.8 1799.8,423.3 1810.0,421.3 1820.2,419.9 1830.4,418.5 1840.5,417.4 1850.7,415.9 1860.9,415.3 1871.1,414.2 1881.2,412.4 1891.4,409.9 1901.6,408.5 1911.8,406.8 1922.0,406.7 1932.1,407.0 1942.3,405.9 1952.5,403.4 1962.7,402.2 1972.9,400.7 1983.0,399.5 1993.2,398.4 2003.4,396.6 2013.6,395.4 2023.8,395.0 2033.9,392.8 2044.1,389.3 2054.3,387.1 2064.5,385.4 2074.6,382.9 2084.8,381.1 2095.0,381.2" fill="none" stroke="#eaecef" stroke-width="1"/>
<polyline points="955.0,536.0 965.2,534.5 975.4,532.9 985.5,531.6 995.7,530.5 1005.9,529.1 1016.1,527.6 1026.2,526.1 1036.4,525.0 1046.6,523.6 1056.8,522.3 1067.0,520.9 1077.1,520.7 1087.3,521.1 1097.5,519.5 1107.7,517.7 1117.9,516.0 1128.0,514.2 1138.2,513.2 1148.4,513.2 1158.6,511.7 1168.8,509.2 1178.9,507.5 1189.1,506.6 1199.3,505.6 1209.5,504.7 1219.6,502.4 1229.8,500.6 1240.0,498.8 1250.2,496.5 1260.4,495.2 1270.5,494.5 1280.7,492.6 1290.9,490.8 1301.1,489.5 1311.2,488.5 1321.4,487.1 1331.6,485.6 1341.8,483.5 1352.0,482.5 1362.1,480.8 1372.3,479.9 1382.5,479.4 1392.7,479.9 1402.9,478.3 1413.0,476.8 1423.2,474.3 1433.4,472.1 1443.6,469.9 1453.8,468.1 1463.9,468.5 1474.1,467.0 1484.3,466.8 1494.5,463.5 1504.6,463.9 1514.8,463.6 1525.0,461.5 1535.2,460.9 1545.4,459.8 1555.5,459.1 1565.7,457.8 1575.9,456.7 1586.1,455.2 1596.2,455.0 1606.4,453.8 1616.6,451.9 1626.8,451.5 1637.0,449.4 1647.1,447.3 1657.3,445.1 1667.5,443.5 1677.7,441.1 1687.9,438.8 1698.0,438.5 1708.2,437.3 1718.4,435.7 1728.6,434.4 1738.8,434.0 1748.9,433.2 1759.1,432.2 1769.3,429.6 1779.5,427.4 1789.6,425.4 1799.8,424.0 1810.0,422.2 1820.2,419.7 1830.4,418.8 1840.5,417.8 1850.7,417.0 1860.9,416.0 1871.1,416.4 1881.2,414.1 1891.4,410.5 1901.6,410.0 1911.8,408.7 1922.0,407.6 1932.1,407.2 1942.3,404.5 1952.5,400.7 1962.7,399.7 1972.9,399.1 1983.0,396.9 1993.2,395.3 2003.4,394.9 2013.6,392.5 2023.8,391.3 2033.9,389.1 2044.1,387.1 2054.3,384.0 2064.5,383.2 2074.6,382.5 2084.8,381.9 2095.0,381.4" fill="none" stroke="#eaecef" stroke-width="1"/>
<polyline points="955.0,536.0 965.2,534.4 975.4,532.8 985.5,531.5 995.7,530.0 1005.9,528.6 1016.1,527.2 1026.2,526.1 1036.4,525.0 1046.6,523.4 1056.8,522.4 1067.0,521.1 1077.1,520.9 1087.3,520.9 1097.5,519.8 1107.7,517.9 1117.9,516.4 1128.0,515.1 1138.2,514.0 1148.4,514.5 1158.6,512.2 1168.8,509.7 1178.9,507.7 1189.1,506.0 1199.3,505.2 1209.5,504.2 1219.6,502.0 1229.8,499.6 1240.0,497.7 1250.2,496.8 1260.4,495.7 1270.5,494.4 1280.7,493.1 1290.9,491.5 1301.1,489.9 1311.2,488.8 1321.4,488.2 1331.6,486.8 1341.8,485.3 1352.0,484.0 1362.1,482.1 1372.3,480.4 1382.5,479.4 1392.7,478.8 1402.9,476.4 1413.0,475.2 1423.2,473.7 1433.4,471.6 1443.6,470.5 1453.8,470.2 1463.9,468.5 1474.1,467.8 1484.3,467.5 1494.5,464.4 1504.6,465.5 1514.8,465.0 1525.0,462.9 1535.2,461.2 1545.4,459.7 1555.5,458.1 1565.7,456.9 1575.9,457.6 1586.1,455.2 1596.2,455.5 1606.4,454.7 1616.6,453.2 1626.8,452.4 1637.0,450.6 1647.1,448.9 1657.3,447.1 1667.5,445.4 1677.7,444.9 1687.9,442.5 1698.0,441.2 1708.2,439.4 1718.4,437.2 1728.6,434.3 1738.8,433.0 1748.9,432.0 1759.1,430.7 1769.3,429.4 1779.5,427.2 1789.6,425.6 1799.8,424.6 1810.0,423.9 1820.2,421.0 1830.4,419.3 1840.5,418.0 1850.7,418.3 1860.9,418.5 1871.1,417.3 1881.2,415.4 1891.4,413.2 1901.6,413.5 1911.8,412.5 1922.0,411.9 1932.1,412.1 1942.3,412.1 1952.5,411.2 1962.7,408.3 1972.9,406.6 1983.0,405.0 1993.2,403.6 2003.4,401.8 2013.6,400.3 2023.8,399.3 2033.9,398.9 2044.1,396.8 2054.3,394.8 2064.5,392.6 2074.6,390.6 2084.8,389.2 2095.0,389.5" fill="none" stroke="#eaecef" stroke-width="1"/>
<polyline points="955.0,536.0 965.2,534.9 975.4,533.6 985.5,532.3 995.7,530.8 1005.9,529.6 1016.1,528.0 1026.2,527.0 1036.4,525.5 1046.6,524.2 1056.8,523.0 1067.0,521.2 1077.1,520.7 1087.3,521.3 1097.5,520.2 1107.7,517.9 1117.9,515.7 1128.0,514.6 1138.2,513.5 1148.4,513.3 1158.6,511.8 1168.8,509.6 1178.9,508.5 1189.1,507.2 1199.3,506.0 1209.5,504.8 1219.6,501.3 1229.8,499.9 1240.0,498.6 1250.2,496.4 1260.4,494.9 1270.5,493.9 1280.7,492.4 1290.9,491.5 1301.1,489.8 1311.2,488.6 1321.4,487.1 1331.6,485.4 1341.8,483.0 1352.0,481.0 1362.1,480.1 1372.3,479.4 1382.5,478.9 1392.7,478.4 1402.9,475.6 1413.0,473.6 1423.2,471.9 1433.4,471.2 1443.6,470.6 1453.8,469.6 1463.9,468.1 1474.1,467.7 1484.3,467.6 1494.5,464.5 1504.6,464.8 1514.8,464.9 1525.0,463.6 1535.2,461.7 1545.4,460.1 1555.5,458.5 1565.7,457.4 1575.9,457.4 1586.1,457.5 1596.2,458.2 1606.4,456.6 1616.6,454.9 1626.8,453.3 1637.0,451.9 1647.1,450.7 1657.3,448.1 1667.5,447.5 1677.7,446.2 1687.9,444.3 1698.0,443.4 1708.2,441.9 1718.4,440.1 1728.6,437.3 1738.8,436.1 1748.9,435.3 1759.1,433.6 1769.3,430.3 1779.5,428.6 1789.6,427.9 1799.8,426.8 1810.0,425.9 1820.2,423.3 1830.4,422.2 1840.5,422.0 1850.7,421.2 1860.9,420.8 1871.1,422.5 1881.2,420.8 1891.4,417.6 1901.6,415.6 1911.8,415.3 1922.0,415.5 1932.1,413.8 1942.3,411.8 1952.5,408.3 1962.7,407.1 1972.9,404.9 1983.0,404.5 1993.2,404.6 2003.4,403.4 2013.6,403.2 2023.8,402.4 2033.9,400.4 2044.1,397.6 2054.3,394.7 2064.5,393.7 2074.6,393.1 2084.8,391.2 2095.0,391.2" fill="none" stroke="#eaecef" stroke-width="1"/>
<polyline points="955.0,536.0 965.2,534.6 975.4,533.4 985.5,532.0 995.7,530.9 1005.9,529.7 1016.1,528.5 1026.2,527.3 1036.4,526.3 1046.6,525.0 1056.8,524.3 1067.0,522.8 1077.1,522.7 1087.3,522.8 1097.5,521.8 1107.7,520.2 1117.9,518.4 1128.0,517.4 1138.2,516.4 1148.4,516.5 1158.6,514.7 1168.8,512.4 1178.9,510.8 1189.1,509.7 1199.3,508.7 1209.5,507.8 1219.6,504.9 1229.8,502.3 1240.0,501.2 1250.2,499.4 1260.4,497.4 1270.5,495.5 1280.7,494.1 1290.9,492.8 1301.1,491.0 1311.2,489.8 1321.4,488.1 1331.6,486.7 1341.8,485.0 1352.0,483.1 1362.1,482.5 1372.3,482.3 1382.5,481.7 1392.7,480.3 1402.9,478.6 1413.0,475.8 1423.2,474.0 1433.4,472.0 1443.6,470.6 1453.8,469.4 1463.9,468.8 1474.1,468.8 1484.3,468.6 1494.5,465.5 1504.6,466.2 1514.8,466.0 1525.0,464.0 1535.2,461.8 1545.4,460.4 1555.5,459.3 1565.7,457.4 1575.9,456.9 1586.1,456.7 1596.2,456.9 1606.4,456.2 1616.6,453.6 1626.8,452.0 1637.0,450.3 1647.1,448.6 1657.3,447.2 1667.5,446.7 1677.7,445.5 1687.9,444.4 1698.0,444.0 1708.2,442.5 1718.4,439.6 1728.6,437.7 1738.8,437.0 1748.9,435.7 1759.1,433.3 1769.3,429.9 1779.5,428.1 1789.6,428.1 1799.8,426.3 1810.0,423.9 1820.2,422.1 1830.4,421.5 1840.5,421.0 1850.7,420.5 1860.9,419.7 1871.1,419.8 1881.2,418.7 1891.4,415.9 1901.6,415.2 1911.8,415.9 1922.0,415.7 1932.1,414.9 1942.3,412.4 1952.5,411.2 1962.7,409.9 1972.9,409.1 1983.0,408.1 1993.2,407.5 2003.4,406.1 2013.6,405.8 2023.8,405.5 2033.9,404.4 2044.1,401.4 2054.3,398.1 2064.5,395.8 2074.6,394.3 2084.8,392.9 2095.0,392.8" fill="none" stroke="#eaecef" stroke-width="1"/>
<polyline points="955.0,536.0 965.2,534.9 975.4,533.8 985.5,532.7 995.7,531.3 1005.9,530.0 1016.1,528.7 1026.2,527.5 1036.4,526.4 1046.6,525.1 1056.8,524.6 1067.0,522.8 1077.1,522.4 1087.3,523.1 1097.5,521.9 1107.7,520.1 1117.9,517.9 1128.0,516.5 1138.2,515.5 1148.4,516.3 1158.6,515.1 1168.8,512.7 1178.9,511.2 1189.1,509.8 1199.3,508.6 1209.5,507.9 1219.6,504.5 1229.8,503.4 1240.0,501.9 1250.2,499.9 1260.4,498.3 1270.5,496.5 1280.7,495.2 1290.9,493.9 1301.1,492.0 1311.2,491.0 1321.4,490.1 1331.6,488.4 1341.8,486.7 1352.0,485.3 1362.1,484.0 1372.3,482.6 1382.5,482.2 1392.7,481.1 1402.9,478.2 1413.0,475.8 1423.2,473.3 1433.4,471.8 1443.6,469.5 1453.8,468.0 1463.9,466.6 1474.1,466.7 1484.3,467.4 1494.5,464.4 1504.6,464.2 1514.8,465.8 1525.0,463.6 1535.2,462.4 1545.4,461.1 1555.5,459.3 1565.7,459.5 1575.9,458.4 1586.1,458.3 1596.2,459.3 1606.4,456.8 1616.6,454.7 1626.8,452.3 1637.0,450.7 1647.1,449.4 1657.3,447.5 1667.5,446.5 1677.7,445.9 1687.9,444.6 1698.0,443.7 1708.2,441.7 1718.4,440.0 1728.6,438.8 1738.8,437.7 1748.9,437.2 1759.1,436.1 1769.3,434.3 1779.5,432.5 1789.6,431.3 1799.8,429.3 1810.0,429.0 1820.2,427.6 1830.4,427.2 1840.5,426.4 1850.7,425.8 1860.9,426.1 1871.1,425.7 1881.2,422.8 1891.4,419.4 1901.6,418.4 1911.8,418.1 1922.0,417.4 1932.1,415.4 1942.3,414.8 1952.5,413.7 1962.7,410.6 1972.9,408.1 1983.0,407.1 1993.2,406.2 2003.4,404.6 2013.6,404.7 2023.8,402.9 2033.9,402.0 2044.1,400.1 2054.3,397.8 2064.5,395.3 2074.6,394.1 2084.8,393.7 2095.0,391.6" fill="none" stroke="#eaecef" stroke-width="1"/>
<polyline points="955.0,536.0 965.2,532.5 975.4,529.8 985.5,527.6 995.7,525.3 1005.9,523.1 1016.1,521.4 1026.2,520.4 1036.4,518.6 1046.6,517.1 1056.8,514.7 1067.0,512.6 1077.1,512.2 1087.3,511.7 1097.5,511.7 1107.7,510.1 1117.9,507.4 1128.0,504.5 1138.2,501.8 1148.4,498.7 1158.6,496.5 1168.8,494.1 1178.9,492.1 1189.1,490.2 1199.3,487.4 1209.5,485.2 1219.6,484.3 1229.8,482.6 1240.0,481.1 1250.2,480.4 1260.4,479.0 1270.5,477.3 1280.7,475.4 1290.9,474.3 1301.1,472.9 1311.2,472.5 1321.4,472.7 1331.6,472.9 1341.8,471.5 1352.0,468.3 1362.1,466.3 1372.3,464.1 1382.5,462.2 1392.7,463.1 1402.9,461.7 1413.0,460.2 1423.2,458.6 1433.4,456.3 1443.6,455.1 1453.8,453.0 1463.9,451.4 1474.1,449.9 1484.3,448.4 1494.5,447.2 1504.6,445.3 1514.8,441.3 1525.0,440.5 1535.2,437.9 1545.4,437.6 1555.5,436.1 1565.7,435.3 1575.9,434.7 1586.1,432.6 1596.2,432.0 1606.4,430.4 1616.6,430.1 1626.8,429.3 1637.0,427.7 1647.1,424.6 1657.3,421.8 1667.5,422.6 1677.7,421.6 1687.9,416.9 1698.0,415.3 1708.2,415.4 1718.4,414.2 1728.6,412.0 1738.8,411.5 1748.9,410.7 1759.1,410.0 1769.3,408.5 1779.5,406.1 1789.6,405.0 1799.8,402.5 1810.0,401.1 1820.2,399.4 1830.4,397.2 1840.5,395.1 1850.7,393.3 1860.9,390.4 1871.1,388.5 1881.2,386.5 1891.4,383.1 1901.6,380.3 1911.8,379.4 1922.0,378.7 1932.1,378.7 1942.3,377.8 1952.5,376.3 1962.7,376.0 1972.9,375.3 1983.0,373.7 1993.2,371.7 2003.4,370.5 2013.6,369.3 2023.8,368.3 2033.9,367.4 2044.1,366.3 2054.3,366.0 2064.5,364.6 2074.6,364.2 2084.8,362.1 2095.0,363.8" fill="none" stroke="#eaecef" stroke-width="1"/>
<polyline points="955.0,536.0 965.2,536.0 975.4,536.0 985.5,535.7 995.7,535.1 1005.9,534.5 1016.1,533.6 1026.2,532.5 1036.4,531.5 1046.6,530.2 1056.8,529.9 1067.0,528.5 1077.1,528.5 1087.3,529.3 1097.5,528.0 1107.7,526.5 1117.9,525.5 1128.0,524.9 1138.2,524.2 1148.4,525.1 1158.6,522.7 1168.8,520.6 1178.9,519.9 1189.1,519.9 1199.3,518.9 1209.5,518.7 1219.6,516.4 1229.8,515.3 1240.0,512.6 1250.2,511.5 1260.4,509.9 1270.5,508.7 1280.7,507.0 1290.9,505.1 1301.1,503.4 1311.2,502.8 1321.4,502.1 1331.6,500.4 1341.8,498.9 1352.0,497.7 1362.1,497.0 1372.3,496.0 1382.5,494.7 1392.7,493.3 1402.9,490.6 1413.0,487.9 1423.2,485.5 1433.4,483.5 1443.6,482.6 1453.8,480.9 1463.9,480.0 1474.1,480.5 1484.3,481.7 1494.5,479.6 1504.6,479.9 1514.8,480.0 1525.0,477.9 1535.2,475.5 1545.4,474.4 1555.5,474.0 1565.7,472.7 1575.9,471.6 1586.1,471.3 1596.2,472.0 1606.4,470.1 1616.6,467.8 1626.8,465.4 1637.0,463.2 1647.1,462.7 1657.3,461.8 1667.5,459.1 1677.7,458.9 1687.9,458.2 1698.0,456.7 1708.2,455.3 1718.4,452.1 1728.6,450.1 1738.8,450.3 1748.9,450.9 1759.1,451.0 1769.3,448.5 1779.5,446.5 1789.6,446.2 1799.8,444.5 1810.0,445.0 1820.2,442.2 1830.4,442.3 1840.5,441.3 1850.7,441.4 1860.9,441.2 1871.1,441.8 1881.2,439.1 1891.4,436.0 1901.6,437.2 1911.8,436.3 1922.0,436.7 1932.1,435.7 1942.3,433.5 1952.5,431.6 1962.7,430.9 1972.9,430.0 1983.0,429.7 1993.2,429.1 2003.4,427.4 2013.6,426.8 2023.8,427.5 2033.9,426.5 2044.1,422.7 2054.3,418.9 2064.5,416.4 2074.6,415.3 2084.8,414.4 2095.0,413.7" fill="none" stroke="#eaecef" stroke-width="1"/>
<polyline points="955.0,536.0 965.2,534.1 975.4,532.1 985.5,530.5 995.7,528.7 1005.9,527.1 1016.1,525.8 1026.2,524.3 1036.4,523.2 1046.6,521.4 1056.8,519.2 1067.0,517.7 1077.1,517.7 1087.3,517.6 1097.5,517.4 1107.7,516.0 1117.9,513.3 1128.0,511.1 1138.2,509.0 1148.4,506.8 1158.6,504.8 1168.8,502.6 1178.9,500.9 1189.1,498.8 1199.3,496.8 1209.5,494.7 1219.6,492.9 1229.8,491.9 1240.0,490.9 1250.2,489.7 1260.4,488.1 1270.5,486.7 1280.7,485.4 1290.9,484.6 1301.1,483.2 1311.2,482.5 1321.4,482.5 1331.6,482.7 1341.8,481.4 1352.0,478.6 1362.1,476.4 1372.3,474.4 1382.5,472.9 1392.7,474.0 1402.9,472.9 1413.0,470.9 1423.2,469.8 1433.4,467.2 1443.6,465.7 1453.8,463.1 1463.9,461.5 1474.1,459.9 1484.3,459.2 1494.5,457.6 1504.6,456.8 1514.8,453.2 1525.0,452.9 1535.2,451.9 1545.4,451.8 1555.5,449.9 1565.7,447.6 1575.9,448.0 1586.1,445.9 1596.2,445.3 1606.4,443.6 1616.6,442.4 1626.8,441.3 1637.0,439.9 1647.1,438.0 1657.3,434.7 1667.5,434.5 1677.7,432.3 1687.9,430.4 1698.0,429.8 1708.2,429.0 1718.4,427.6 1728.6,426.1 1738.8,425.5 1748.9,424.4 1759.1,423.1 1769.3,421.6 1779.5,420.3 1789.6,417.8 1799.8,415.5 1810.0,413.4 1820.2,412.1 1830.4,411.0 1840.5,409.5 1850.7,408.3 1860.9,406.4 1871.1,405.5 1881.2,403.0 1891.4,400.3 1901.6,399.6 1911.8,397.3 1922.0,396.8 1932.1,397.5 1942.3,395.6 1952.5,394.2 1962.7,392.1 1972.9,390.6 1983.0,388.0 1993.2,385.2 2003.4,384.3 2013.6,382.0 2023.8,380.8 2033.9,379.0 2044.1,377.4 2054.3,374.6 2064.5,372.2 2074.6,370.0 2084.8,368.3 2095.0,368.0" fill="none" stroke="#eaecef" stroke-width="1"/>
<path d="M955.0 536H2095.0" stroke="#a7adb4" stroke-width="1.6"/>
<polyline points="955.0,536.0 965.2,534.8 975.4,533.6 985.5,532.4 995.7,531.2 1005.9,530.0 1016.1,528.7 1026.2,527.4 1036.4,526.1 1046.6,524.8 1056.8,523.3 1067.0,521.5 1077.1,519.8 1087.3,518.0 1097.5,516.2 1107.7,514.5 1117.9,512.0 1128.0,509.4 1138.2,506.8 1148.4,504.3 1158.6,502.3 1168.8,500.3 1178.9,498.3 1189.1,496.2 1199.3,494.2 1209.5,492.2 1219.6,491.0 1229.8,490.0 1240.0,489.0 1250.2,488.0 1260.4,486.7 1270.5,485.3 1280.7,483.9 1290.9,482.8 1301.1,481.6 1311.2,481.2 1321.4,481.2 1331.6,481.2 1341.8,480.0 1352.0,477.1 1362.1,475.1 1372.3,473.1 1382.5,471.1 1392.7,472.3 1402.9,471.1 1413.0,470.0 1423.2,468.8 1433.4,467.6 1443.6,467.9 1453.8,468.2 1463.9,468.5 1474.1,468.7 1484.3,468.8 1494.5,465.9 1504.6,466.2 1514.8,466.8 1525.0,464.8 1535.2,462.7 1545.4,461.6 1555.5,460.7 1565.7,459.8 1575.9,458.8 1586.1,458.3 1596.2,458.7 1606.4,457.0 1616.6,454.9 1626.8,452.8 1637.0,450.8 1647.1,449.5 1657.3,448.4 1667.5,447.3 1677.7,446.2 1687.9,445.1 1698.0,443.9 1708.2,442.2 1718.4,440.5 1728.6,439.1 1738.8,437.8 1748.9,436.6 1759.1,434.9 1769.3,432.7 1779.5,430.5 1789.6,429.4 1799.8,428.5 1810.0,427.5 1820.2,425.2 1830.4,424.9 1840.5,424.5 1850.7,424.2 1860.9,423.9 1871.1,423.5 1881.2,421.6 1891.4,418.4 1901.6,418.1 1911.8,418.1 1922.0,418.1 1932.1,416.7 1942.3,414.8 1952.5,413.0 1962.7,411.2 1972.9,409.4 1983.0,408.7 1993.2,408.0 2003.4,407.3 2013.6,406.6 2023.8,405.9 2033.9,404.3 2044.1,401.7 2054.3,399.5 2064.5,397.4 2074.6,396.0 2084.8,395.4 2095.0,394.8" fill="none" stroke="#e5322d" stroke-width="2.0" stroke-linejoin="round" stroke-linecap="round"/>
<polyline points="955.0,536.0 965.2,534.4 975.4,532.7 985.5,530.8 995.7,528.8 1005.9,527.1 1016.1,525.6 1026.2,524.1 1036.4,523.2 1046.6,523.9 1056.8,524.2 1067.0,522.6 1077.1,522.2 1087.3,522.6 1097.5,521.2 1107.7,519.2 1117.9,517.7 1128.0,516.8 1138.2,516.1 1148.4,516.6 1158.6,514.9 1168.8,512.7 1178.9,511.6 1189.1,510.6 1199.3,509.7 1209.5,508.7 1219.6,505.3 1229.8,503.5 1240.0,501.7 1250.2,500.0 1260.4,498.3 1270.5,496.6 1280.7,494.9 1290.9,493.3 1301.1,491.6 1311.2,490.3 1321.4,489.2 1331.6,487.5 1341.8,485.8 1352.0,484.2 1362.1,483.2 1372.3,482.2 1382.5,481.2 1392.7,480.2 1402.9,477.7 1413.0,475.1 1423.2,473.4 1433.4,471.8 1443.6,470.3 1453.8,468.9 1463.9,468.4 1474.1,467.5 1484.3,465.9 1494.5,464.2 1504.6,462.3 1514.8,460.3 1525.0,458.2 1535.2,456.2 1545.4,454.2 1555.5,452.1 1565.7,449.2 1575.9,446.3 1586.1,443.4 1596.2,442.4 1606.4,441.4 1616.6,440.4 1626.8,439.4 1637.0,438.5 1647.1,436.2 1657.3,433.6 1667.5,433.0 1677.7,430.8 1687.9,427.9 1698.0,427.5 1708.2,427.2 1718.4,426.1 1728.6,424.3 1738.8,423.5 1748.9,422.6 1759.1,421.7 1769.3,420.1 1779.5,418.5 1789.6,416.6 1799.8,414.5 1810.0,412.4 1820.2,410.4 1830.4,408.3 1840.5,406.3 1850.7,404.7 1860.9,403.2 1871.1,401.7 1881.2,399.3 1891.4,397.1 1901.6,395.3 1911.8,393.5 1922.0,392.2 1932.1,393.2 1942.3,391.9 1952.5,390.5 1962.7,388.9 1972.9,387.3 1983.0,384.7 1993.2,382.2 2003.4,379.6 2013.6,377.4 2023.8,375.6 2033.9,373.8 2044.1,372.1 2054.3,370.0 2064.5,368.2 2074.6,367.7 2084.8,365.0 2095.0,364.4" fill="none" stroke="#13a565" stroke-width="2.0" stroke-linejoin="round" stroke-linecap="round"/>
<polyline points="955.0,536.0 965.2,533.9 975.4,531.8 985.5,530.0 995.7,528.2 1005.9,526.4 1016.1,525.1 1026.2,523.8 1036.4,522.5 1046.6,520.9 1056.8,518.7 1067.0,516.7 1077.1,516.5 1087.3,516.2 1097.5,516.0 1107.7,514.6 1117.9,513.0 1128.0,511.2 1138.2,508.7 1148.4,506.1 1158.6,503.5 1168.8,501.3 1178.9,499.6 1189.1,497.9 1199.3,496.2 1209.5,494.6 1219.6,493.2 1229.8,492.0 1240.0,490.7 1250.2,489.4 1260.4,489.3 1270.5,490.5 1280.7,488.6 1290.9,486.6 1301.1,484.5 1311.2,482.9 1321.4,482.6 1331.6,482.2 1341.8,480.8 1352.0,478.0 1362.1,476.7 1372.3,475.6 1382.5,474.9 1392.7,474.3 1402.9,473.4 1413.0,471.0 1423.2,468.7 1433.4,466.3 1443.6,464.5 1453.8,462.7 1463.9,460.9 1474.1,459.2 1484.3,457.8 1494.5,456.4 1504.6,454.9 1514.8,450.7 1525.0,449.9 1535.2,449.3 1545.4,448.7 1555.5,446.9 1565.7,445.0 1575.9,445.2 1586.1,443.1 1596.2,442.4 1606.4,441.7 1616.6,441.1 1626.8,440.4 1637.0,439.8 1647.1,439.0 1657.3,437.4 1667.5,435.8 1677.7,434.4 1687.9,433.6 1698.0,432.8 1708.2,432.0 1718.4,431.2 1728.6,430.4 1738.8,429.8 1748.9,429.3 1759.1,428.7 1769.3,428.2 1779.5,426.9 1789.6,425.3 1799.8,423.6 1810.0,421.9 1820.2,419.9 1830.4,417.9 1840.5,416.1 1850.7,415.3 1860.9,414.4 1871.1,413.6 1881.2,411.4 1891.4,409.4 1901.6,409.6 1911.8,408.4 1922.0,406.4 1932.1,405.4 1942.3,404.5 1952.5,403.0 1962.7,401.5 1972.9,400.0 1983.0,397.4 1993.2,394.7 2003.4,393.9 2013.6,393.2 2023.8,392.5 2033.9,391.0 2044.1,388.2 2054.3,386.1 2064.5,384.3 2074.6,382.5 2084.8,380.7 2095.0,378.9" fill="none" stroke="#2f66ec" stroke-width="2.6" stroke-linejoin="round" stroke-linecap="round"/>
<path d="M955.0 341V601 M955.0 601H2095.0 M949 341H955.0 M949 406H955.0 M949 471H955.0 M949 536H955.0 M949 601H955.0 M955.00 601V607 M975.36 601V607 M995.71 601V607 M1016.07 601V607 M1036.43 601V607 M1056.79 601V607 M1077.14 601V607 M1097.50 601V607 M1117.86 601V607 M1148.39 601V607 M1178.93 601V607 M1209.46 601V607 M1240.00 601V607 M1270.54 601V607 M1301.07 601V607 M1331.61 601V607 M1362.14 601V607 M1392.68 601V607 M1423.21 601V607 M1453.75 601V607 M1484.29 601V607 M1514.82 601V607 M1545.36 601V607 M1575.89 601V607 M1606.43 601V607 M1636.96 601V607 M1667.50 601V607 M1698.04 601V607 M1728.57 601V607 M1759.11 601V607 M1789.64 601V607 M1820.18 601V607 M1850.71 601V607 M1881.25 601V607 M1911.79 601V607 M1942.32 601V607 M1972.86 601V607 M2003.39 601V607 M2033.93 601V607 M2064.46 601V607 M2095.00 601V607" stroke="#8a8a8a" stroke-width="1.2" fill="none"/>
<text x="946.50" y="347.00" font-size="10" text-anchor="end" fill="#555555" letter-spacing="0.45">$90.0k</text>
<text x="946.50" y="410.00" font-size="10" text-anchor="end" fill="#555555" letter-spacing="0.45">$60.0k</text>
<text x="946.50" y="475.00" font-size="10" text-anchor="end" fill="#555555" letter-spacing="0.45">$30.0k</text>
<text x="946.50" y="540.00" font-size="10" text-anchor="end" fill="#555555" letter-spacing="0.45">$0</text>
<text x="946.50" y="605.00" font-size="10" text-anchor="end" fill="#555555" letter-spacing="0.45">-$30.0k</text>
<text x="955.25" y="616.10" font-size="10" text-anchor="middle" fill="#555555" letter-spacing="0.5">0</text>
<text x="975.61" y="616.10" font-size="10" text-anchor="middle" fill="#555555" letter-spacing="0.5">14</text>
<text x="995.96" y="616.10" font-size="10" text-anchor="middle" fill="#555555" letter-spacing="0.5">28</text>
<text x="1016.32" y="616.10" font-size="10" text-anchor="middle" fill="#555555" letter-spacing="0.5">42</text>
<text x="1036.68" y="616.10" font-size="10" text-anchor="middle" fill="#555555" letter-spacing="0.5">56</text>
<text x="1057.04" y="616.10" font-size="10" text-anchor="middle" fill="#555555" letter-spacing="0.5">70</text>
<text x="1077.39" y="616.10" font-size="10" text-anchor="middle" fill="#555555" letter-spacing="0.5">84</text>
<text x="1097.75" y="616.10" font-size="10" text-anchor="middle" fill="#555555" letter-spacing="0.5">98</text>
<text x="1118.11" y="616.10" font-size="10" text-anchor="middle" fill="#555555" letter-spacing="0.5">112</text>
<text x="1148.64" y="616.10" font-size="10" text-anchor="middle" fill="#555555" letter-spacing="0.5">133</text>
<text x="1179.18" y="616.10" font-size="10" text-anchor="middle" fill="#555555" letter-spacing="0.5">154</text>
<text x="1209.71" y="616.10" font-size="10" text-anchor="middle" fill="#555555" letter-spacing="0.5">175</text>
<text x="1240.25" y="616.10" font-size="10" text-anchor="middle" fill="#555555" letter-spacing="0.5">196</text>
<text x="1270.79" y="616.10" font-size="10" text-anchor="middle" fill="#555555" letter-spacing="0.5">217</text>
<text x="1301.32" y="616.10" font-size="10" text-anchor="middle" fill="#555555" letter-spacing="0.5">238</text>
<text x="1331.86" y="616.10" font-size="10" text-anchor="middle" fill="#555555" letter-spacing="0.5">259</text>
<text x="1362.39" y="616.10" font-size="10" text-anchor="middle" fill="#555555" letter-spacing="0.5">280</text>
<text x="1392.93" y="616.10" font-size="10" text-anchor="middle" fill="#555555" letter-spacing="0.5">301</text>
<text x="1423.46" y="616.10" font-size="10" text-anchor="middle" fill="#555555" letter-spacing="0.5">322</text>
<text x="1454.00" y="616.10" font-size="10" text-anchor="middle" fill="#555555" letter-spacing="0.5">343</text>
<text x="1484.54" y="616.10" font-size="10" text-anchor="middle" fill="#555555" letter-spacing="0.5">364</text>
<text x="1515.07" y="616.10" font-size="10" text-anchor="middle" fill="#555555" letter-spacing="0.5">385</text>
<text x="1545.61" y="616.10" font-size="10" text-anchor="middle" fill="#555555" letter-spacing="0.5">406</text>
<text x="1576.14" y="616.10" font-size="10" text-anchor="middle" fill="#555555" letter-spacing="0.5">427</text>
<text x="1606.68" y="616.10" font-size="10" text-anchor="middle" fill="#555555" letter-spacing="0.5">448</text>
<text x="1637.21" y="616.10" font-size="10" text-anchor="middle" fill="#555555" letter-spacing="0.5">469</text>
<text x="1667.75" y="616.10" font-size="10" text-anchor="middle" fill="#555555" letter-spacing="0.5">490</text>
<text x="1698.29" y="616.10" font-size="10" text-anchor="middle" fill="#555555" letter-spacing="0.5">511</text>
<text x="1728.82" y="616.10" font-size="10" text-anchor="middle" fill="#555555" letter-spacing="0.5">532</text>
<text x="1759.36" y="616.10" font-size="10" text-anchor="middle" fill="#555555" letter-spacing="0.5">553</text>
<text x="1789.89" y="616.10" font-size="10" text-anchor="middle" fill="#555555" letter-spacing="0.5">574</text>
<text x="1820.43" y="616.10" font-size="10" text-anchor="middle" fill="#555555" letter-spacing="0.5">595</text>
<text x="1850.96" y="616.10" font-size="10" text-anchor="middle" fill="#555555" letter-spacing="0.5">616</text>
<text x="1881.50" y="616.10" font-size="10" text-anchor="middle" fill="#555555" letter-spacing="0.5">637</text>
<text x="1912.04" y="616.10" font-size="10" text-anchor="middle" fill="#555555" letter-spacing="0.5">658</text>
<text x="1942.57" y="616.10" font-size="10" text-anchor="middle" fill="#555555" letter-spacing="0.5">679</text>
<text x="1973.11" y="616.10" font-size="10" text-anchor="middle" fill="#555555" letter-spacing="0.5">700</text>
<text x="2003.64" y="616.10" font-size="10" text-anchor="middle" fill="#555555" letter-spacing="0.5">721</text>
<text x="2034.18" y="616.10" font-size="10" text-anchor="middle" fill="#555555" letter-spacing="0.5">742</text>
<text x="2064.71" y="616.10" font-size="10" text-anchor="middle" fill="#555555" letter-spacing="0.5">763</text>
<text x="2091.75" y="616.10" font-size="10" text-anchor="middle" fill="#555555" letter-spacing="0.5">780</text>
<text x="1525.50" y="636.10" font-size="10" text-anchor="middle" fill="#666666" letter-spacing="0.15">Trades</text>
</svg>
<svg class="r" style="left:0;top:0" width="2143" height="1142" viewBox="0 0 2143 1142" font-family='"Liberation Sans", sans-serif'>
<path d="M935.0 862.0H2095.0 M935.0 822.0H2095.0 M935.0 782.0H2095.0 M935.0 742.0H2095.0 M964.0 742.0V902.0 M1080.0 742.0V902.0 M1196.0 742.0V902.0 M1312.0 742.0V902.0 M1428.0 742.0V902.0 M1544.0 742.0V902.0 M1660.0 742.0V902.0 M1776.0 742.0V902.0 M1892.0 742.0V902.0 M2008.0 742.0V902.0 M2095.0 742.0V902.0" stroke="#ebebeb" stroke-width="1" stroke-dasharray="3 3" fill="none"/>
<path d="M940.80 902.0V902.00Q940.80 900.40 942.40 900.40H985.60Q987.20 900.40 987.20 902.00V902.0Z" fill="#33cc8c"/>
<path d="M998.80 902.0V902.00Q998.80 898.80 1002.00 898.80H1042.00Q1045.20 898.80 1045.20 902.00V902.0Z" fill="#33cc8c"/>
<path d="M1056.80 902.0V902.00Q1056.80 898.80 1060.00 898.80H1100.00Q1103.20 898.80 1103.20 902.00V902.0Z" fill="#33cc8c"/>
<path d="M1114.80 902.0V901.20Q1114.80 897.20 1118.80 897.20H1157.20Q1161.20 897.20 1161.20 901.20V902.0Z" fill="#33cc8c"/>
<path d="M1172.80 902.0V902.00Q1172.80 898.80 1176.00 898.80H1216.00Q1219.20 898.80 1219.20 902.00V902.0Z" fill="#33cc8c"/>
<path d="M1230.80 902.0V875.60Q1230.80 871.60 1234.80 871.60H1273.20Q1277.20 871.60 1277.20 875.60V902.0Z" fill="#33cc8c"/>
<path d="M1288.80 902.0V870.80Q1288.80 866.80 1292.80 866.80H1331.20Q1335.20 866.80 1335.20 870.80V902.0Z" fill="#33cc8c"/>
<path d="M1346.80 902.0V870.80Q1346.80 866.80 1350.80 866.80H1389.20Q1393.20 866.80 1393.20 870.80V902.0Z" fill="#33cc8c"/>
<path d="M1404.80 902.0V830.80Q1404.80 826.80 1408.80 826.80H1447.20Q1451.20 826.80 1451.20 830.80V902.0Z" fill="#33cc8c"/>
<path d="M1462.80 902.0V845.20Q1462.80 841.20 1466.80 841.20H1505.20Q1509.20 841.20 1509.20 845.20V902.0Z" fill="#33cc8c"/>
<path d="M1520.80 902.0V800.40Q1520.80 796.40 1524.80 796.40H1563.20Q1567.20 796.40 1567.20 800.40V902.0Z" fill="#33cc8c"/>
<path d="M1578.80 902.0V776.40Q1578.80 772.40 1582.80 772.40H1621.20Q1625.20 772.40 1625.20 776.40V902.0Z" fill="#33cc8c"/>
<path d="M1636.80 902.0V824.40Q1636.80 820.40 1640.80 820.40H1679.20Q1683.20 820.40 1683.20 824.40V902.0Z" fill="#33cc8c"/>
<path d="M1694.80 902.0V808.40Q1694.80 804.40 1698.80 804.40H1737.20Q1741.20 804.40 1741.20 808.40V902.0Z" fill="#33cc8c"/>
<path d="M1752.80 902.0V866.00Q1752.80 862.00 1756.80 862.00H1795.20Q1799.20 862.00 1799.20 866.00V902.0Z" fill="#33cc8c"/>
<path d="M1810.80 902.0V861.20Q1810.80 857.20 1814.80 857.20H1853.20Q1857.20 857.20 1857.20 861.20V902.0Z" fill="#33cc8c"/>
<path d="M1868.80 902.0V880.40Q1868.80 876.40 1872.80 876.40H1911.20Q1915.20 876.40 1915.20 880.40V902.0Z" fill="#33cc8c"/>
<path d="M1926.80 902.0V893.20Q1926.80 889.20 1930.80 889.20H1969.20Q1973.20 889.20 1973.20 893.20V902.0Z" fill="#33cc8c"/>
<path d="M1984.80 902.0V899.60Q1984.80 895.60 1988.80 895.60H2027.20Q2031.20 895.60 2031.20 899.60V902.0Z" fill="#33cc8c"/>
<path d="M2042.80 902.0V902.00Q2042.80 898.80 2046.00 898.80H2086.00Q2089.20 898.80 2089.20 902.00V902.0Z" fill="#33cc8c"/>
<path d="M935.0 742.0V902.0 M935.0 902.0H2095.0 M929 902.0H935.0 M929 862.0H935.0 M929 822.0H935.0 M929 782.0H935.0 M929 742.0H935.0 M964.0 902.0V908 M1080.0 902.0V908 M1196.0 902.0V908 M1312.0 902.0V908 M1428.0 902.0V908 M1544.0 902.0V908 M1660.0 902.0V908 M1776.0 902.0V908 M1892.0 902.0V908 M2008.0 902.0V908" stroke="#8a8a8a" stroke-width="1.2" fill="none"/>
<text x="926.50" y="906.40" font-size="10" text-anchor="end" fill="#555555" letter-spacing="0.05">0</text>
<text x="926.50" y="866.40" font-size="10" text-anchor="end" fill="#555555" letter-spacing="0.05">25</text>
<text x="926.50" y="826.40" font-size="10" text-anchor="end" fill="#555555" letter-spacing="0.05">50</text>
<text x="926.50" y="786.40" font-size="10" text-anchor="end" fill="#555555" letter-spacing="0.05">75</text>
<text x="926.50" y="748.90" font-size="10" text-anchor="end" fill="#555555" letter-spacing="0.05">100</text>
<text x="964.00" y="916.30" font-size="10" text-anchor="middle" fill="#555555" letter-spacing="0.1">$54k</text>
<text x="1080.00" y="916.30" font-size="10" text-anchor="middle" fill="#555555" letter-spacing="0.1">$57k</text>
<text x="1196.00" y="916.30" font-size="10" text-anchor="middle" fill="#555555" letter-spacing="0.1">$60k</text>
<text x="1312.00" y="916.30" font-size="10" text-anchor="middle" fill="#555555" letter-spacing="0.1">$64k</text>
<text x="1428.00" y="916.30" font-size="10" text-anchor="middle" fill="#555555" letter-spacing="0.1">$67k</text>
<text x="1544.00" y="916.30" font-size="10" text-anchor="middle" fill="#555555" letter-spacing="0.1">$70k</text>
<text x="1660.00" y="916.30" font-size="10" text-anchor="middle" fill="#555555" letter-spacing="0.1">$74k</text>
<text x="1776.00" y="916.30" font-size="10" text-anchor="middle" fill="#555555" letter-spacing="0.1">$77k</text>
<text x="1892.00" y="916.30" font-size="10" text-anchor="middle" fill="#555555" letter-spacing="0.1">$80k</text>
<text x="2008.00" y="916.30" font-size="10" text-anchor="middle" fill="#555555" letter-spacing="0.1">$84k</text>
<text x="0" y="0" font-size="10" text-anchor="middle" fill="#666666" letter-spacing="0.3" transform="translate(914.2 810.3) rotate(-90)">Sims</text>
</svg>
</body></html>
